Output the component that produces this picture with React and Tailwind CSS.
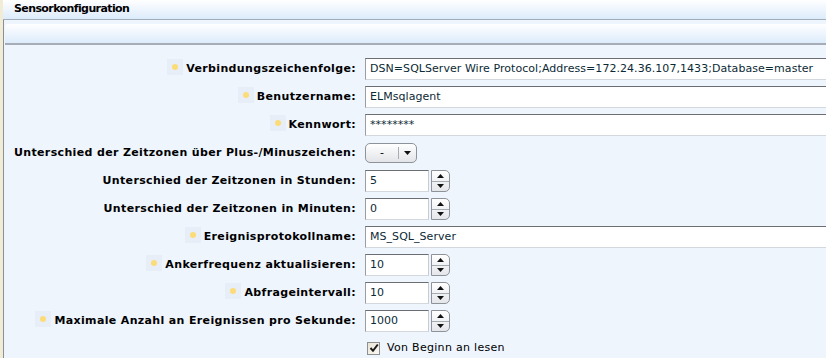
import React from "react";

const font = { fontFamily: '"DejaVu Sans", Verdana, sans-serif' };

function Bullet() {
  return (
    <span className="mr-[3px] flex h-4 w-4 -translate-y-[2px] items-center justify-center bg-[#e7eef7]">
      <span className="h-[6px] w-[6px] rounded-full bg-[#fcdc78]" />
    </span>
  );
}

function Label({ text, bullet }) {
  return (
    <div className="flex h-[22px] items-center justify-end text-[11px] font-bold tracking-[0.35px] text-black">
      {bullet && <Bullet />}
      <span>{text}</span>
    </div>
  );
}

function TextInput({ value }) {
  return (
    <div className="flex h-[22px] items-center border border-t-[#6b6e73] border-l-[#9a9da2] border-r-[#c8ccd2] border-b-[#d3d8de] bg-white pl-[4px] text-[11px] tracking-[0.05px] text-[#0c2a36]">
      {value}
    </div>
  );
}

function Spinner({ value }) {
  return (
    <div className="flex h-[22px] items-center gap-[2px]">
      <div className="flex h-[22px] w-[64px] items-center border border-t-[#6b6e73] border-l-[#9a9da2] border-r-[#c8ccd2] border-b-[#d3d8de] bg-white pl-[4px] text-[11px] text-[#0c2a36]">
        {value}
      </div>
      <div className="flex h-[22px] w-[19px] flex-col overflow-hidden rounded-r-[5px] border border-[#8e9399] bg-gradient-to-b from-white to-[#e4e6ea]">
        <div className="flex flex-1 items-center justify-center border-b border-[#a6abb1]">
          <svg width="7" height="4" viewBox="0 0 7 4"><path d="M3.5 0 L7 4 L0 4 Z" fill="#111" /></svg>
        </div>
        <div className="flex flex-1 items-center justify-center">
          <svg width="7" height="4" viewBox="0 0 7 4"><path d="M0 0 L7 0 L3.5 4 Z" fill="#111" /></svg>
        </div>
      </div>
    </div>
  );
}

function Dropdown() {
  return (
    <div className="flex h-[20px] w-[52px] items-center rounded-[5px] border border-[#8e9399] bg-gradient-to-b from-white to-[#e2e4e8] text-[11px] text-black">
      <div className="flex w-[32px] justify-center">-</div>
      <div className="h-[12px] w-px bg-[#a8adb3]" />
      <div className="flex flex-1 items-center justify-center">
        <svg width="7" height="4" viewBox="0 0 7 4"><path d="M0 0 L7 0 L3.5 4 Z" fill="#111" /></svg>
      </div>
    </div>
  );
}

export default function App() {
  const rows = [
    { label: "Verbindungszeichenfolge:", bullet: true, field: <TextInput value="DSN=SQLServer Wire Protocol;Address=172.24.36.107,1433;Database=master" /> },
    { label: "Benutzername:", bullet: true, field: <TextInput value="ELMsqlagent" /> },
    { label: "Kennwort:", bullet: true, field: <TextInput value="********" /> },
    { label: "Unterschied der Zeitzonen über Plus-/Minuszeichen:", field: <Dropdown /> },
    { label: "Unterschied der Zeitzonen in Stunden:", field: <Spinner value="5" /> },
    { label: "Unterschied der Zeitzonen in Minuten:", field: <Spinner value="0" /> },
    { label: "Ereignisprotokollname:", bullet: true, field: <TextInput value="MS_SQL_Server" /> },
    { label: "Ankerfrequenz aktualisieren:", bullet: true, field: <Spinner value="10" /> },
    { label: "Abfrageintervall:", bullet: true, field: <Spinner value="10" /> },
    { label: "Maximale Anzahl an Ereignissen pro Sekunde:", bullet: true, field: <Spinner value="1000" /> },
  ];

  return (
    <div className="flex h-[358px] w-[826px] overflow-hidden bg-[#eef5fd]" style={font}>
      <div className="w-[3px] shrink-0 bg-[#f1ecd6]" />
      <div className="flex min-w-0 flex-1 flex-col">
        <div className="flex h-[20px] shrink-0 items-center border-b border-[#a3adba] bg-gradient-to-b from-white to-[#dcebfb] pl-[11px] text-[11px] font-bold tracking-[-0.6px] text-black">
          Sensorkonfiguration
        </div>
        <div className="flex flex-1 flex-col border-l border-[#8c9096] pt-[4px]">
          <div className="ml-[1px] h-[21px] shrink-0 rounded-tl-[3px] border-b-2 border-[#a6adb7] bg-gradient-to-b from-white to-[#dcebfb]" />
          <div className="grid grid-cols-[352px_1fr] gap-x-[9px] gap-y-[6px] pt-[13px]">
            {rows.map((r, i) => (
              <React.Fragment key={i}>
                <Label text={r.label} bullet={r.bullet} />
                <div className="flex items-center">
                  {r.field.type === TextInput ? <div className="w-[470px]">{r.field}</div> : r.field}
                </div>
              </React.Fragment>
            ))}
            <div />
            <div className="flex h-[20px] items-center pl-[2px] text-[11px] tracking-[0.3px] text-black">
              <span className="mr-[7px] flex h-[13px] w-[13px] items-center justify-center border border-[#8d8f93] bg-gradient-to-br from-[#e8e4d4] to-[#fbf9f2]">
                <svg width="10" height="10" viewBox="0 0 10 10"><path d="M1.5 5 L4 7.8 L8.8 1.5" stroke="#1a1a1a" strokeWidth="2" fill="none" /></svg>
              </span>
              Von Beginn an lesen
            </div>
          </div>
        </div>
      </div>
    </div>
  );
}
